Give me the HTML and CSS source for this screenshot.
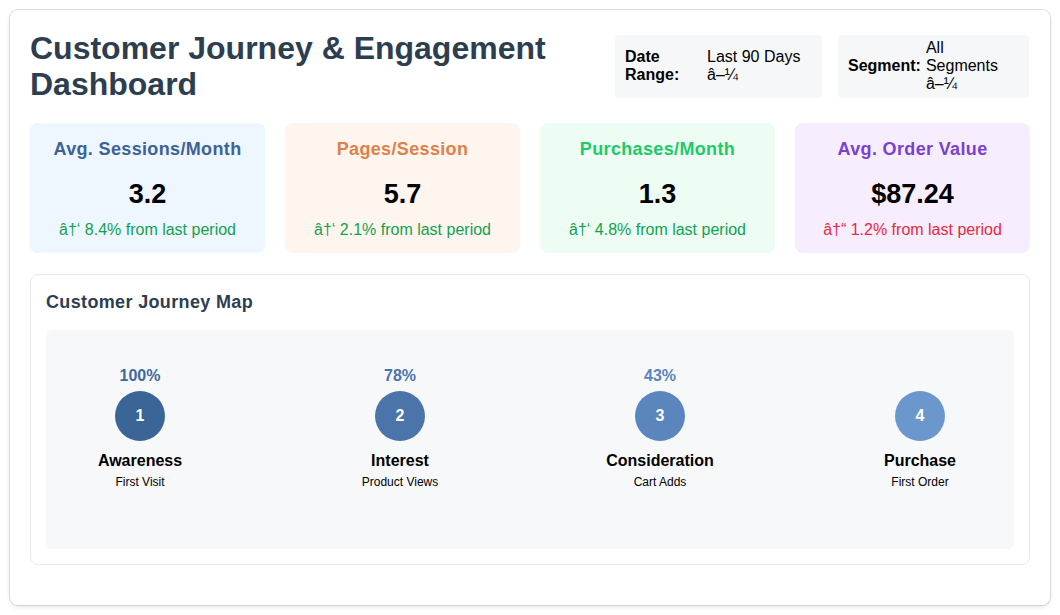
FILE: index.html
```html
<!DOCTYPE html>
<html lang="en">
<head>
<meta charset="utf-8">
<title>Customer Journey &amp; Engagement Dashboard</title>
<link rel="stylesheet" href="styles.css">
</head>
<body>
<div class="dashboard">
  <header class="header">
    <h1 class="title">Customer Journey &amp; Engagement Dashboard</h1>
    <div class="filters">
      <div class="filter filter-date">
        <span class="filter-label label-date">Date Range:</span>
        <span class="filter-value value-date">Last 90 Days â–¼</span>
      </div>
      <div class="filter filter-segment">
        <span class="filter-label">Segment:</span>
        <span class="filter-value value-segment">All Segments â–¼</span>
      </div>
    </div>
  </header>

  <section class="metrics">
    <div class="metric metric-blue">
      <h3 class="metric-title">Avg. Sessions/Month</h3>
      <div class="metric-value">3.2</div>
      <div class="metric-change up">â†‘ 8.4% from last period</div>
    </div>
    <div class="metric metric-orange">
      <h3 class="metric-title">Pages/Session</h3>
      <div class="metric-value">5.7</div>
      <div class="metric-change up">â†‘ 2.1% from last period</div>
    </div>
    <div class="metric metric-green">
      <h3 class="metric-title">Purchases/Month</h3>
      <div class="metric-value">1.3</div>
      <div class="metric-change up">â†‘ 4.8% from last period</div>
    </div>
    <div class="metric metric-purple">
      <h3 class="metric-title">Avg. Order Value</h3>
      <div class="metric-value">$87.24</div>
      <div class="metric-change down">â†“ 1.2% from last period</div>
    </div>
  </section>

  <section class="journey">
    <h2 class="journey-title">Customer Journey Map</h2>
    <div class="journey-map">
      <div class="step step-1">
        <div class="step-pct">100%</div>
        <div class="step-circle">1</div>
        <div class="step-name">Awareness</div>
        <div class="step-sub">First Visit</div>
      </div>
      <div class="step step-2">
        <div class="step-pct">78%</div>
        <div class="step-circle">2</div>
        <div class="step-name">Interest</div>
        <div class="step-sub">Product Views</div>
      </div>
      <div class="step step-3">
        <div class="step-pct">43%</div>
        <div class="step-circle">3</div>
        <div class="step-name">Consideration</div>
        <div class="step-sub">Cart Adds</div>
      </div>
      <div class="step step-4">
        <div class="step-pct"></div>
        <div class="step-circle">4</div>
        <div class="step-name">Purchase</div>
        <div class="step-sub">First Order</div>
      </div>
    </div>
  </section>
</div>
</body>
</html>
```

FILE: styles.css
```css
* { box-sizing: border-box; }

html, body {
  margin: 0;
  background: #ffffff;
}

body {
  padding: 10px;
  font-family: "Liberation Sans", Arial, Helvetica, sans-serif;
  color: #000;
}

.dashboard {
  width: 1040px;
  height: 595px;
  padding: 20px;
  background: #ffffff;
  border-radius: 8px;
  box-shadow: 0 0 0 1px rgba(0, 0, 0, 0.11), 0 2px 5px rgba(0, 0, 0, 0.1);
}

.header {
  display: flex;
  justify-content: space-between;
  align-items: center;
  margin-bottom: 21px;
}

.title {
  margin: 0;
  font-size: 32px;
  line-height: 36px;
  font-weight: bold;
  color: #2c3e50;
  width: 560px;
}

.filters {
  display: flex;
  gap: 16px;
  margin-right: 1px;
}

.filter {
  display: flex;
  align-items: center;
  padding: 4px 10px;
  background: #f6f7f9;
  border-radius: 4px;
  font-size: 16px;
  line-height: 18px;
  height: 63px;
}

.filter-date { width: 207px; }
.filter-segment { width: 191px; }

.filter-label {
  font-weight: bold;
  flex: none;
}

.label-date { width: 74px; }

.filter-value { margin-left: 8px; }
.value-date { width: 105px; }
.value-segment { margin-left: 5px; width: 90px; }

.metrics {
  display: grid;
  grid-template-columns: repeat(4, 1fr);
  gap: 20px;
  margin-bottom: 21px;
}

.metric {
  height: 130px;
  padding: 16px 10px 0;
  border-radius: 8px;
  text-align: center;
}

.metric-blue { background: #eef6ff; }
.metric-orange { background: #fff5ef; }
.metric-green { background: #edfdf4; }
.metric-purple { background: #f6eefe; }

.metric-title {
  margin: 0 0 17px;
  font-size: 18px;
  line-height: 21px;
  font-weight: bold;
  letter-spacing: 0.35px;
}

.metric-blue .metric-title { color: #3c6398; }
.metric-orange .metric-title { color: #e0814a; }
.metric-green .metric-title { color: #1ec96a; }
.metric-purple .metric-title { color: #7b3fd2; }

.metric-value {
  font-size: 27px;
  line-height: 34px;
  font-weight: bold;
  color: #000;
  margin-bottom: 10px;
}

.metric-change {
  font-size: 16px;
  line-height: 18px;
}

.metric-change.up { color: #12a150; }
.metric-change.down { color: #e8283e; }

.journey {
  border: 1px solid #e6e8eb;
  border-radius: 8px;
  padding: 17px 15px 15px;
}

.journey-title {
  margin: 0 0 17px;
  font-size: 18px;
  line-height: 21px;
  font-weight: bold;
  color: #2c3e50;
  letter-spacing: 0.35px;
}

.journey-map {
  display: flex;
  justify-content: space-between;
  align-items: flex-start;
  height: 219px;
  padding: 37px 19px 0;
  background: #f7f8fa;
  border-radius: 6px;
}

.step {
  width: 150px;
  display: flex;
  flex-direction: column;
  align-items: center;
  text-align: center;
}

.step-pct {
  height: 18px;
  font-size: 16px;
  line-height: 18px;
  font-weight: bold;
  margin-bottom: 6px;
}

.step-circle {
  width: 50px;
  height: 50px;
  border-radius: 50%;
  display: flex;
  align-items: center;
  justify-content: center;
  color: #ffffff;
  font-size: 16px;
  font-weight: bold;
  margin-bottom: 11px;
}

.step-1 .step-circle { background: #3b6497; }
.step-2 .step-circle { background: #4a74aa; }
.step-3 .step-circle { background: #5a85bd; }
.step-4 .step-circle { background: #6b97cd; }

.step-1 .step-pct { color: #3f689c; }
.step-2 .step-pct { color: #4b74aa; }
.step-3 .step-pct { color: #5a85bd; }

.step-name {
  font-size: 16px;
  line-height: 18px;
  font-weight: bold;
  color: #000;
  margin-bottom: 5px;
}

.step-sub {
  font-size: 12px;
  line-height: 14px;
  color: #000;
}
```
